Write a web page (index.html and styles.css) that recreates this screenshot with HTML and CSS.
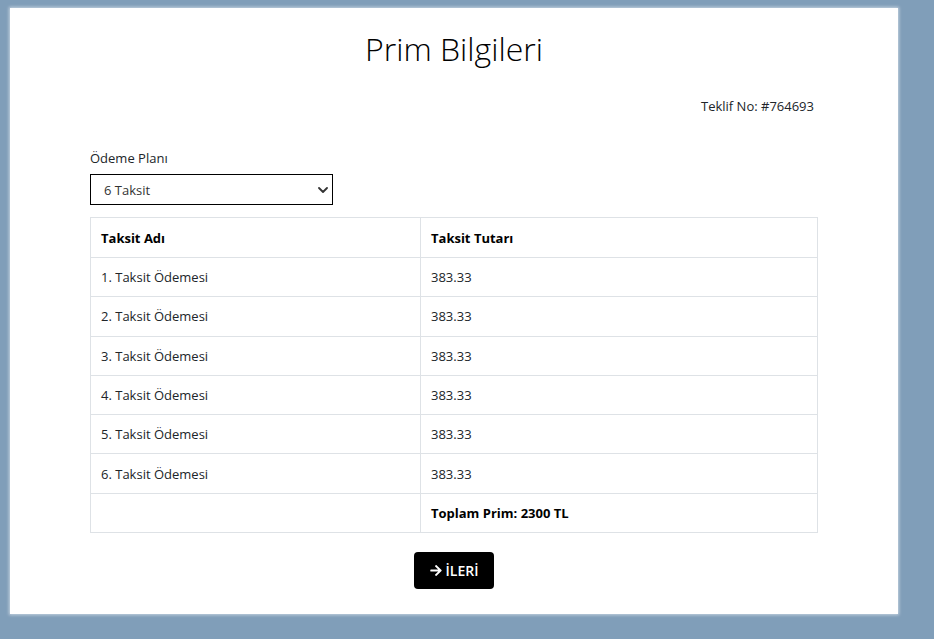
FILE: index.html
```html
<!DOCTYPE html>
<html lang="tr">
<head>
<meta charset="utf-8">
<title>Prim Bilgileri</title>
<link rel="stylesheet" href="styles.css">
</head>
<body>
<div class="card">
  <h1 class="title">Prim Bilgileri</h1>
  <div class="offer">Teklif No: #764693</div>
  <label class="plan-label" for="plan">Ödeme Planı</label>
  <div class="select">
    <span>6 Taksit</span>
    <svg class="chev" viewBox="0 0 10 6" width="10" height="6"><path d="M1 1l4 4 4-4" fill="none" stroke="#333" stroke-width="1.8" stroke-linecap="round" stroke-linejoin="round"/></svg>
  </div>
  <table class="plan">
    <thead>
      <tr><th class="c1">Taksit Adı</th><th>Taksit Tutarı</th></tr>
    </thead>
    <tbody>
      <tr><td class="c1">1. Taksit Ödemesi</td><td>383.33</td></tr>
      <tr><td class="c1">2. Taksit Ödemesi</td><td>383.33</td></tr>
      <tr><td class="c1">3. Taksit Ödemesi</td><td>383.33</td></tr>
      <tr><td class="c1">4. Taksit Ödemesi</td><td>383.33</td></tr>
      <tr><td class="c1">5. Taksit Ödemesi</td><td>383.33</td></tr>
      <tr><td class="c1">6. Taksit Ödemesi</td><td>383.33</td></tr>
      <tr><td class="c1"></td><td class="total">Toplam Prim: 2300 TL</td></tr>
    </tbody>
  </table>
  <div class="actions">
    <button class="next" type="button">
      <svg viewBox="0 0 448 512" width="12" height="13"><path fill="#fff" d="M190.5 66.9l22.2-22.2c9.4-9.4 24.6-9.4 33.9 0L441 239c9.4 9.4 9.4 24.6 0 33.9L246.6 467.3c-9.4 9.4-24.6 9.4-33.9 0l-22.2-22.2c-9.5-9.5-9.3-25 .4-34.3L311.4 296H24c-13.3 0-24-10.7-24-24v-32c0-13.3 10.7-24 24-24h287.4L190.9 101.2c-9.8-9.3-10-24.8-.4-34.3z"/></svg>
      <span>İLERİ</span>
    </button>
  </div>
</div>
</body>
</html>
```
FILE: styles.css
```css
html, body {
  margin: 0;
  padding: 0;
}
body {
  background: #809eb9;
  font-family: "Open Sans", "DejaVu Sans", sans-serif;
  color: #212529;
  height: 639px;
  overflow: hidden;
}
.card {
  box-sizing: border-box;
  width: 888px;
  height: 606px;
  margin: 8px 0 0 10px;
  background: #fff;
  box-shadow: 0 0 3px 1px rgba(255,255,255,0.55);
  padding: 0 80px;
}
.title {
  margin: 0;
  padding-top: 23px;
  text-align: center;
  font-weight: 300;
  font-size: 32px;
  line-height: 36px;
  color: #000;
}
.offer {
  margin-top: 30px;
  text-align: right;
  padding-right: 4px;
  font-size: 13px;
  line-height: 18px;
}
.plan-label {
  display: block;
  margin-top: 34px;
  font-size: 13px;
  line-height: 18px;
}
.select {
  box-sizing: border-box;
  margin-top: 7px;
  width: 243px;
  height: 31px;
  border: 1px solid #000;
  display: flex;
  align-items: center;
  justify-content: space-between;
  padding: 0 4px 0 13px;
  font-size: 13px;
  color: #333;
}
.plan {
  margin-top: 12px;
  width: 728px;
  border-collapse: collapse;
  font-size: 13px;
}
.plan th, .plan td {
  border: 1px solid #dee2e6;
  padding: 0 10px;
  height: 38.3px;
  text-align: left;
}
.plan th {
  height: 39px;
  font-weight: 700;
  color: #000;
}
.plan .c1 { width: 309px; }
.plan .total { font-weight: 700; color: #000; }
.actions {
  display: flex;
  justify-content: center;
  margin-top: 19px;
}
.next {
  display: flex;
  align-items: center;
  gap: 4px;
  height: 37px;
  width: 80px;
  justify-content: center;
  background: #000;
  color: #fff;
  border: 0;
  border-radius: 4px;
  font-family: inherit;
  font-size: 14px;
  font-weight: 600;
  padding: 0;
}
```
